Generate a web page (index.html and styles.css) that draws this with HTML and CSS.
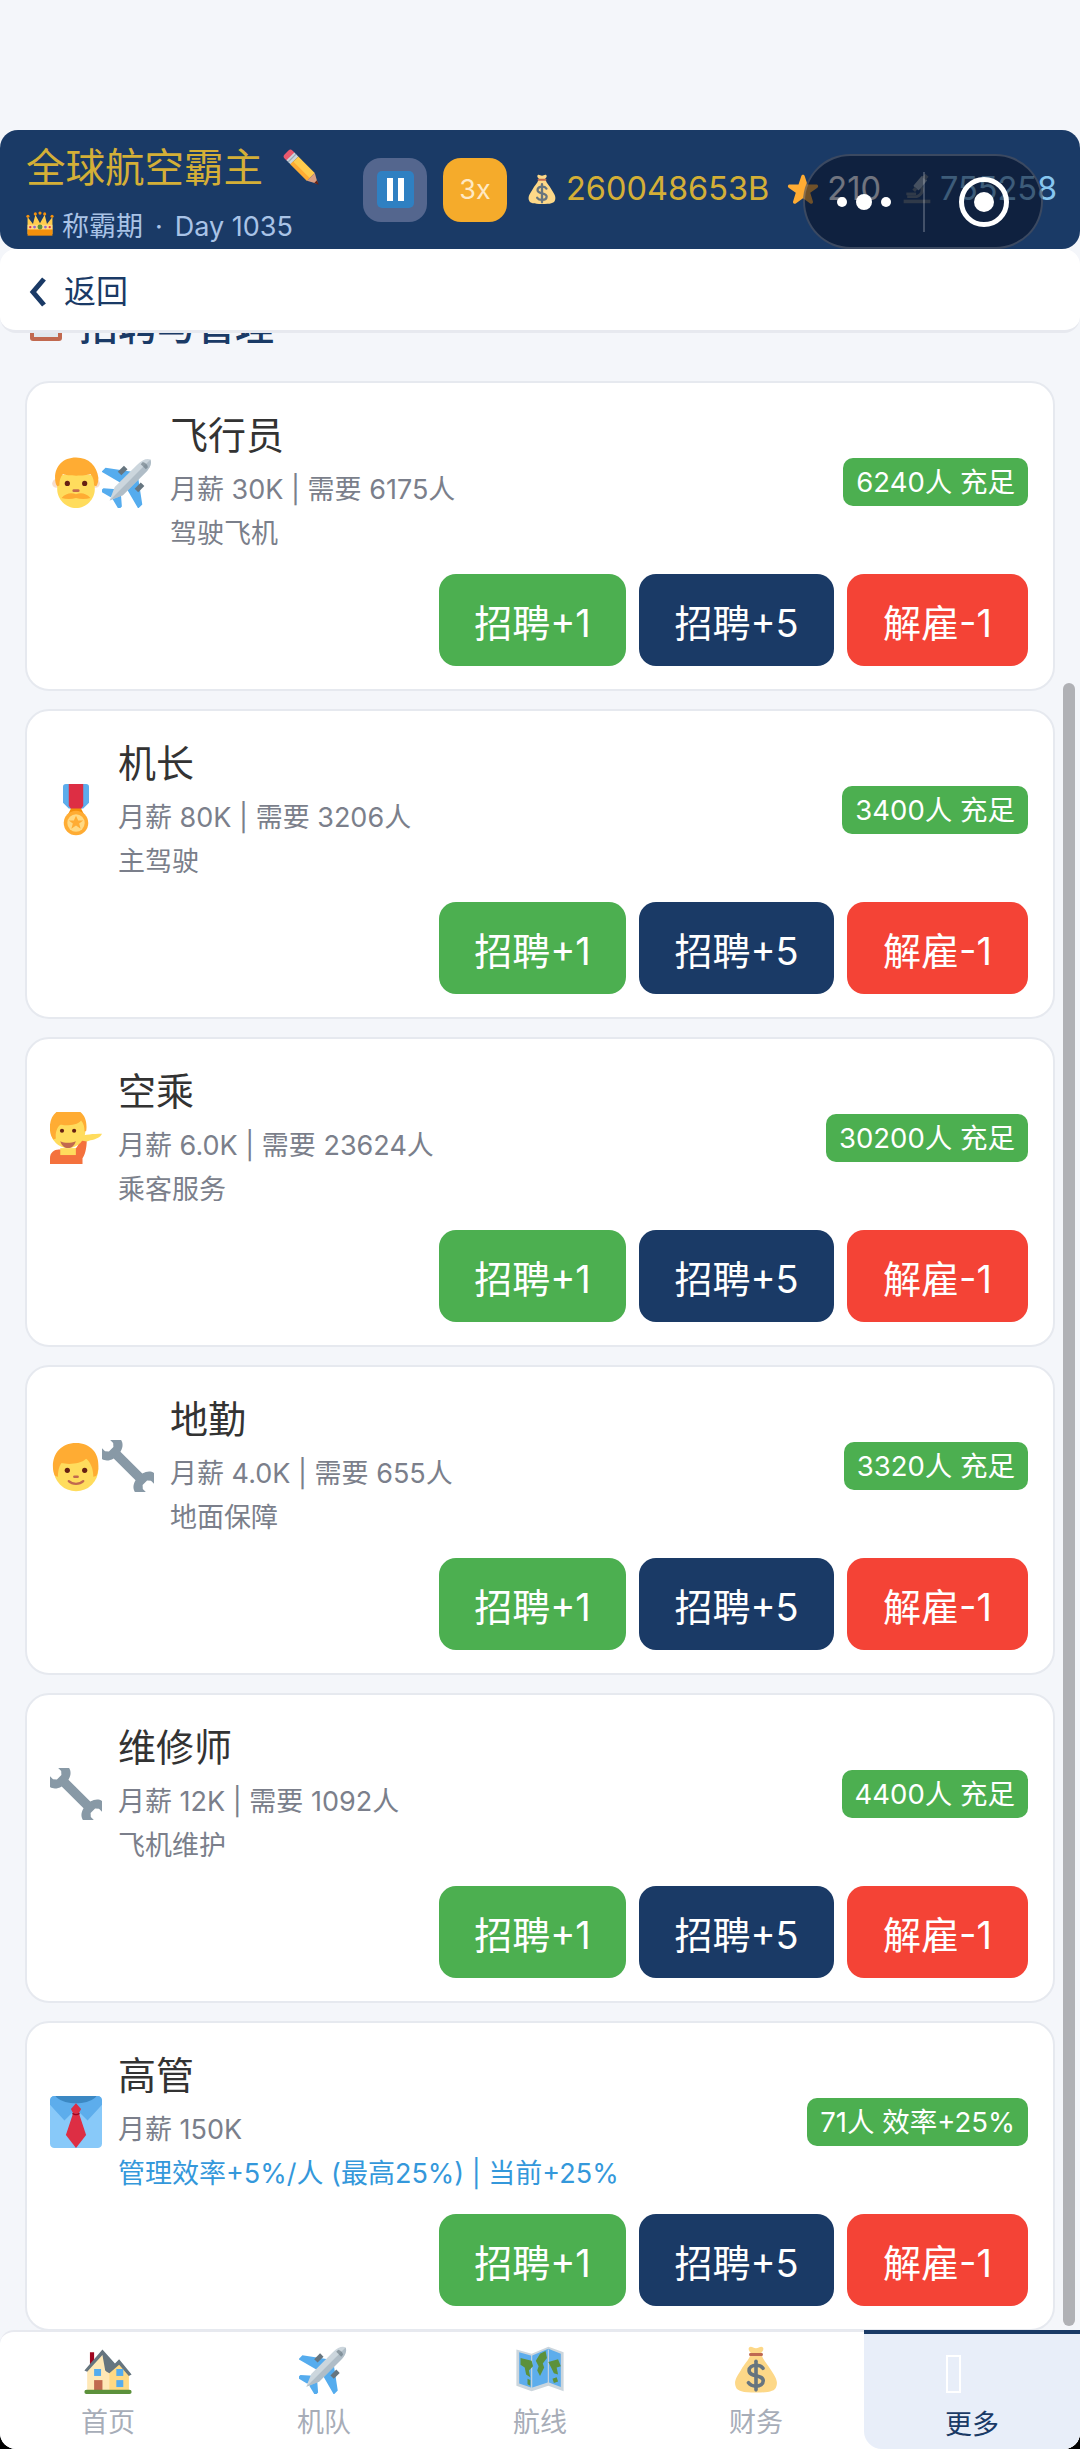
FILE: index.html
```html
<!DOCTYPE html>
<html lang="zh-CN">
<head>
<meta charset="utf-8">
<title>招聘与管理</title>
<link rel="stylesheet" href="styles.css">
</head>
<body>
<svg class="sprite" aria-hidden="true">
  <symbol id="i-pencil" viewBox="0 0 36 36"><g transform="rotate(45 18 18)"><rect x="-3" y="13" width="7" height="10" rx="2.5" fill="#EA596E"/><rect x="2" y="13" width="5" height="10" fill="#CCD6DD"/><rect x="3.5" y="13" width="1.2" height="10" fill="#99AAB5"/><rect x="7" y="13" width="21" height="10" fill="#FFCC4D"/><rect x="7" y="19.5" width="21" height="3.5" fill="#FFAC33"/><path d="M28 13l9 5-9 5z" fill="#D99E82"/><path d="M34 16.3l4 1.7-4 1.7z" fill="#662113"/></g></symbol>
  <symbol id="i-crown" viewBox="0 0 36 36"><path d="M2 9l7 9 3-12 6 11 6-11 3 12 7-9 0 22H2z" fill="#FFCC4D"/><path d="M2 24h32v9H2z" fill="#F4900C"/><circle cx="2.5" cy="8" r="2" fill="#F4900C"/><circle cx="12" cy="5" r="2" fill="#F4900C"/><circle cx="18" cy="4" r="2" fill="#F4900C"/><circle cx="24" cy="5" r="2" fill="#F4900C"/><circle cx="33.5" cy="8" r="2" fill="#F4900C"/><path d="M2 19h32v6H2z" fill="#FFD983"/><circle cx="18" cy="22" r="3.2" fill="#5C913B"/><circle cx="11" cy="22" r="1.8" fill="#9266CC"/><circle cx="25" cy="22" r="1.8" fill="#9266CC"/><circle cx="5.5" cy="22" r="1.5" fill="#DD2E44"/><circle cx="30.5" cy="22" r="1.5" fill="#DD2E44"/></symbol>
  <symbol id="i-bag" viewBox="0 0 36 36"><path d="M13 2.5c1.5-1.5 3 .5 5 .5s3.500-2 5-.5c1 1.500-.5 3-2 4.500H15c-1.500-1.500-3-3-2-4.500z" fill="#FDD888"/><path d="M14 8h8c1.500 4 4 6 7 11 3.500 5.500 5 8 3.500 12-1 3-5 4-14.500 4S4.500 34 3.500 31C2 27 3.500 24.500 7 19c3-5 5.500-7 7-11z" fill="#FDD888"/><rect x="13" y="6.500" width="10" height="2.200" rx="1" fill="#BF6952"/><g fill="none" stroke="#67757F" stroke-width="2.600" stroke-linecap="round"><path d="M23 17.500c-1-1.500-3-2.200-5-2.200-2.700 0-5 1.400-5 3.800 0 5 10.200 2.500 10.200 7.400 0 2.400-2.400 3.800-5.200 3.800-2.200 0-4.300-.8-5.400-2.400"/><path d="M18 12.500v20.500"/></g></symbol>
  <symbol id="i-star" viewBox="0 0 36 36"><path fill="#FFAC33" d="M27.287 34.627c-.404 0-.806-.124-1.152-.371L18 28.422l-8.135 5.834c-.693.496-1.623.496-2.312-.008-.689-.499-.979-1.385-.721-2.194l3.034-9.792-8.062-5.681c-.685-.505-.97-1.393-.708-2.203.264-.808 1.016-1.357 1.866-1.363L12.947 13l3.179-9.549c.268-.809 1.023-1.353 1.874-1.353.851 0 1.606.545 1.875 1.353L23 13l10.036.015c.853.006 1.606.556 1.867 1.363.263.81-.022 1.698-.708 2.203l-8.062 5.681 3.034 9.792c.26.809-.033 1.695-.72 2.194-.347.254-.753.379-1.16.379z"/></symbol>
  <symbol id="i-scope" viewBox="0 0 36 36"><path d="M3 30h30v4H3z" fill="#66757F"/><path d="M23 13c5 5 3 13-5 15H7v-3h10c6-1.500 6-7 3.500-10z" fill="#66757F"/><g transform="rotate(40 22 11)"><rect x="18" y="4" width="8" height="15" rx="1" fill="#99AAB5"/><rect x="19.500" y="0" width="5" height="5" fill="#66757F"/><rect x="20" y="19" width="4" height="4" fill="#66757F"/></g><path d="M6 22h11v3H6z" fill="#66757F"/></symbol>
  <symbol id="i-man" viewBox="0 0 36 36"><circle cx="4.500" cy="19" r="3" fill="#F7DECE"/><circle cx="31.500" cy="19" r="3" fill="#F7DECE"/><path d="M5 13h26v10c0 7-6 13-13 13S5 30 5 23z" fill="#FFDC5D"/><path d="M18 1C9 1 3.500 7 3.500 15c0 2.500.5 4.500 1.500 6l1.500-.5c0-3 .5-6 2.500-8 3 1.500 15 1.500 19 0 2 2 2.500 5 2.500 8l1.500.5c1-1.500 1.500-3.500 1.500-6C32.500 7 27 1 18 1z" fill="#FFAC33"/><circle cx="12" cy="19" r="1.800" fill="#662113"/><circle cx="24" cy="19" r="1.800" fill="#662113"/><rect x="15.500" y="23" width="5" height="2" rx="1" fill="#C1694F"/><path d="M8 29c3-3.500 7-4 10-2.500 3-1.500 7-1 10 2.500-3 1-7 1-10 0-3 1-7 1-10 0z" fill="#FFAC33"/></symbol>
  <symbol id="i-kid" viewBox="0 0 36 36"><circle cx="18" cy="20" r="15.500" fill="#FFDC5D"/><path d="M18 2C8 2 2 9 2 18c0 3 .5 5 1.500 7l2 .5c0-3 .5-7 2.500-9.500 4 1 13 1 17-3 3 2 5 7 5 12.500l2-.5c1-2 1.500-4 1.500-7C34 9 28 2 18 2z" fill="#FFAC33"/><circle cx="12" cy="21" r="1.800" fill="#662113"/><circle cx="24" cy="21" r="1.800" fill="#662113"/><rect x="16" y="24.500" width="4" height="1.800" rx=".9" fill="#C1694F"/><path d="M13 28.500c2.500 2.500 7.500 2.500 10 0" fill="none" stroke="#C1694F" stroke-width="1.600" stroke-linecap="round"/></symbol>
  <symbol id="i-plane" viewBox="0 0 36 36"><g transform="rotate(45 18 18)"><path d="M15 11L0 22v4l15-4zM21 11l15 11v4l-15-4zM16 27l-7 6v3l8-2zM20 27l7 6v3l-8-2z" fill="#55ACEE"/><rect x="8" y="12" width="3.500" height="6" fill="#66757F"/><rect x="24.500" y="12" width="3.500" height="6" fill="#66757F"/><path d="M18-4c2.500 1 4 4 4 9v22l-4 9-4-9V5c0-5 1.500-8 4-9z" fill="#CCD6DD"/><path d="M18-4c2.500 1 4 4 4 9v22l-4 9z" fill="#99AAB5" opacity=".55"/><path d="M15.500 1c1.500-1 3.500-1 5 0v2h-5z" fill="#66757F" opacity=".6"/></g></symbol>
  <symbol id="i-medal" viewBox="0 0 36 36"><path d="M9 2a2 2 0 0 1 2-2h14a2 2 0 0 1 2 2v11l-4 4H13l-4-4z" fill="#5DADEC"/><path d="M13 0h10v15l-2 3h-6l-2-3z" fill="#DD2E44"/><path d="M14.500 17h7l2 4h-11z" fill="#F4900C"/><circle cx="18" cy="27" r="8.500" fill="#FFAC33"/><circle cx="18" cy="27" r="6" fill="#FFD983"/><path d="M18 22l1.500 3.300h3.500l-2.800 2.100 1 3.500-3.200-2.100-3.200 2.100 1-3.500-2.800-2.100h3.500z" fill="#FFAC33"/></symbol>
  <symbol id="i-tip" viewBox="0 0 36 36"><path d="M0 36v-4c0-4 3-6 6-6h10c2-.5 3.500-2 4-5l.500-4 5 .5c0 5.500-.5 11-3 14.500v4z" fill="#F4713D"/><path d="M20 17c4-1.500 10-2 16-2-1 2.500-4.500 4-8 4.500l-2.500 1-5-1z" fill="#FFDC5D"/><g transform="translate(-2.500 -2.600) scale(1.2)"><path d="M8 23h9v4H8z" fill="#FFDC5D"/><circle cx="12.500" cy="13" r="10" fill="#FFDC5D"/><path d="M12.500 0C6 0 2 4.500 2 11c0 3 .5 5 2 7l1.500-.5c-.5-3 .5-6.500 2.500-8 3 .5 10 .5 12-2.500 1.500 1.500 2 3.500 2 6.500l1-.5C24 5 20 0 12.500 0z" fill="#FFAC33"/><circle cx="9" cy="13" r="1.200" fill="#662113"/><circle cx="16" cy="13" r="1.200" fill="#662113"/><path d="M8 19c2.500 1.200 6 1.200 9 0-1 2.800-2.500 4-4.500 4S9 21.800 8 19z" fill="#C1694F"/></g></symbol>
  <symbol id="i-wrench" viewBox="0 0 36 36"><g transform="rotate(-45 18 18)"><path fill="#8899A6" d="M14 -6.500V-0.500L15.800 1.500H20.200L22 -0.500V-6.500C25.800 -5.500 27.500 -2.500 27.500 0.500C27.500 3.800 25.300 6.300 21.300 7.300V28.700C25.300 29.700 27.500 32.200 27.500 35.500C27.500 38.500 25.800 41.500 22 42.500V36.500L20.200 34.500H15.800L14 36.500V42.500C10.200 41.500 8.500 38.500 8.500 35.500C8.500 32.200 10.700 29.700 14.700 28.700V7.300C10.700 6.300 8.500 3.800 8.500 0.500C8.500 -2.500 10.200 -5.500 14 -6.500Z"/></g></symbol>
  <symbol id="i-tie" viewBox="0 0 36 36"><rect x="0" y="0" width="36" height="36" rx="3" fill="#88C9F9"/><path d="M0 3a3 3 0 0 1 3-3h30a3 3 0 0 1 3 3v3L26 17l-8-8-8 8L0 6z" fill="#5DADEC"/><path d="M4 0h28v.5C28 4 23 5 18 5S8 4 4 .5z" fill="#3B88C3"/><path d="M18 5l3.500 4-1.500 3H16l-1.500-3z" fill="#DD2E44"/><path d="M16 12h4l5 15-7 9-7-9z" fill="#DD2E44"/><path d="M15.500 12c1.500 1 3.500 1 5 0" fill="none" stroke="#A0041E" stroke-width="1"/></symbol>
  <symbol id="i-house" viewBox="0 0 36 36"><path d="M3 34V17L13 7l10 10 3-2 7 6v13z" fill="#FFE8B6"/><path d="M19 34V19l7-6 7 8v13z" fill="#FFD983"/><path d="M5 6h3v7l-3 3z" fill="#A0041E"/><path d="M1 19L14 4l9 10 3-3 9 11-2 1-7-8-7 6-2-1-1-1L14 8 3 20z" fill="#66757F"/><rect x="8" y="18" width="5" height="5" fill="#55ACEE"/><rect x="24" y="18" width="5" height="5" fill="#55ACEE"/><rect x="24" y="26" width="5" height="5" fill="#55ACEE"/><rect x="8" y="26" width="6" height="8" fill="#C1694F"/><rect x="1" y="33" width="34" height="3" rx="1.500" fill="#5C913B"/></symbol>
  <symbol id="i-map" viewBox="0 0 36 36"><path d="M1 4l11 3 12-5 11 4v28l-11-4-12 4-11-4z" fill="#CCD6DD"/><path d="M3 6l9 2.500 12-5 9 3.500v24l-9-3.500-12 4-9-3z" fill="#5DADEC"/><path d="M12 8v24M24 4v24" stroke="#CCD6DD" stroke-width=".8"/><path d="M4 10l8 2 1 4-3 3 1 5-3-2-1-5-3-2zM15 12l3-5 4-2 1 5-3 4 1 3-3 6-2-4 1-3zM24 13l7-2 2 5-3 1 1 5-3-1-2-4zM27 25l3-1 1 3-3 1zM9 25l2 1 0 4-2-1z" fill="#5C913B"/></symbol>
  <symbol id="i-board" viewBox="0 0 36 36"><rect x="2" y="2" width="32" height="34" rx="3" fill="#C1694F"/><rect x="6" y="6" width="24" height="26" fill="#E1E8ED"/><path d="M10 20h16M10 25h16" stroke="#99AAB5" stroke-width="2"/></symbol>
</svg>

<div class="page">
  <div class="status-space"></div>

  <header class="game-bar">
    <div class="brand">
      <div class="brand-title"><span>全球航空霸主</span><svg class="emoji emoji-title"><use href="#i-pencil"/></svg></div>
      <div class="brand-sub"><svg class="emoji emoji-crown"><use href="#i-crown"/></svg><span>称霸期<span class="sub-dot">·</span>Day 1035</span></div>
    </div>
    <button class="ctl ctl-pause" type="button"><span class="pause-glyph"><i></i><i></i></span></button>
    <button class="ctl ctl-speed" type="button">3x</button>
    <div class="stat stat-money"><svg class="emoji emoji-stat"><use href="#i-bag"/></svg>260048653B</div>
    <div class="stat stat-star"><svg class="emoji emoji-stat"><use href="#i-star"/></svg>210</div>
    <div class="stat stat-sci"><svg class="emoji emoji-stat"><use href="#i-scope"/></svg>755258</div>
    <div class="capsule">
      <span class="capsule-dots"><i></i><i class="big"></i><i></i></span>
      <span class="capsule-line"></span>
      <span class="capsule-target"></span>
    </div>
  </header>

  <div class="back-bar">
    <svg class="back-chevron" viewBox="0 0 18 30"><path d="M15 2L4 15l11 13" fill="none" stroke="#1a3a66" stroke-width="5"/></svg>
    <span>返回</span>
  </div>

  <main class="content">
    <h2 class="section-title"><svg class="emoji emoji-board"><use href="#i-board"/></svg>招聘与管理</h2>

    <section class="card">
      <div class="card-top">
        <div class="role-icon"><svg class="emoji"><use href="#i-man"/></svg><svg class="emoji"><use href="#i-plane"/></svg></div>
        <div class="role-info">
          <div class="role-name">飞行员</div>
          <div class="role-meta">月薪 30K | 需要 6175人</div>
          <div class="role-desc">驾驶飞机</div>
        </div>
        <span class="pill">6240人 充足</span>
      </div>
      <div class="actions"><button class="btn btn-green" type="button">招聘+1</button><button class="btn btn-navy" type="button">招聘+5</button><button class="btn btn-red" type="button">解雇-1</button></div>
    </section>

    <section class="card">
      <div class="card-top">
        <div class="role-icon"><svg class="emoji"><use href="#i-medal"/></svg></div>
        <div class="role-info">
          <div class="role-name">机长</div>
          <div class="role-meta">月薪 80K | 需要 3206人</div>
          <div class="role-desc">主驾驶</div>
        </div>
        <span class="pill">3400人 充足</span>
      </div>
      <div class="actions"><button class="btn btn-green" type="button">招聘+1</button><button class="btn btn-navy" type="button">招聘+5</button><button class="btn btn-red" type="button">解雇-1</button></div>
    </section>

    <section class="card">
      <div class="card-top">
        <div class="role-icon"><svg class="emoji"><use href="#i-tip"/></svg></div>
        <div class="role-info">
          <div class="role-name">空乘</div>
          <div class="role-meta">月薪 6.0K | 需要 23624人</div>
          <div class="role-desc">乘客服务</div>
        </div>
        <span class="pill">30200人 充足</span>
      </div>
      <div class="actions"><button class="btn btn-green" type="button">招聘+1</button><button class="btn btn-navy" type="button">招聘+5</button><button class="btn btn-red" type="button">解雇-1</button></div>
    </section>

    <section class="card">
      <div class="card-top">
        <div class="role-icon"><svg class="emoji"><use href="#i-kid"/></svg><svg class="emoji"><use href="#i-wrench"/></svg></div>
        <div class="role-info">
          <div class="role-name">地勤</div>
          <div class="role-meta">月薪 4.0K | 需要 655人</div>
          <div class="role-desc">地面保障</div>
        </div>
        <span class="pill">3320人 充足</span>
      </div>
      <div class="actions"><button class="btn btn-green" type="button">招聘+1</button><button class="btn btn-navy" type="button">招聘+5</button><button class="btn btn-red" type="button">解雇-1</button></div>
    </section>

    <section class="card">
      <div class="card-top">
        <div class="role-icon"><svg class="emoji"><use href="#i-wrench"/></svg></div>
        <div class="role-info">
          <div class="role-name">维修师</div>
          <div class="role-meta">月薪 12K | 需要 1092人</div>
          <div class="role-desc">飞机维护</div>
        </div>
        <span class="pill">4400人 充足</span>
      </div>
      <div class="actions"><button class="btn btn-green" type="button">招聘+1</button><button class="btn btn-navy" type="button">招聘+5</button><button class="btn btn-red" type="button">解雇-1</button></div>
    </section>

    <section class="card">
      <div class="card-top">
        <div class="role-icon"><svg class="emoji"><use href="#i-tie"/></svg></div>
        <div class="role-info">
          <div class="role-name">高管</div>
          <div class="role-meta">月薪 150K</div>
          <div class="role-desc role-desc-blue">管理效率+5%/人 (最高25%) | 当前+25%</div>
        </div>
        <span class="pill">71人 效率+25%</span>
      </div>
      <div class="actions"><button class="btn btn-green" type="button">招聘+1</button><button class="btn btn-navy" type="button">招聘+5</button><button class="btn btn-red" type="button">解雇-1</button></div>
    </section>

    <div class="scroll-thumb"></div>
  </main>

  <nav class="tabs">
    <div class="tab"><svg class="emoji tab-icon"><use href="#i-house"/></svg><span>首页</span></div>
    <div class="tab"><svg class="emoji tab-icon"><use href="#i-plane"/></svg><span>机队</span></div>
    <div class="tab"><svg class="emoji tab-icon"><use href="#i-map"/></svg><span>航线</span></div>
    <div class="tab"><svg class="emoji tab-icon"><use href="#i-bag"/></svg><span>财务</span></div>
    <div class="tab tab-active"><span class="tofu"></span><span>更多</span></div>
  </nav>
</div>
</body>
</html>
```
FILE: styles.css
```css
* { box-sizing: border-box; }
html, body { margin: 0; padding: 0; background: #000; }
body {
  width: 1080px;
  height: 2449px;
  overflow: hidden;
  font-family: Inter, "Noto Sans CJK SC", sans-serif;
  font-weight: 400;
}
button { font-family: inherit; font-weight: inherit; border: 0; margin: 0; }
.sprite { position: absolute; width: 0; height: 0; }
.emoji { display: block; flex: none; width: 52px; height: 52px; overflow: visible; }

.page {
  position: relative;
  display: flex;
  flex-direction: column;
  height: 2449px;
  background: #f4f6fa;
  border-radius: 0 0 16px 16px;
  overflow: hidden;
}
.status-space { flex: none; height: 130px; }

/* game bar */
.game-bar {
  position: relative;
  z-index: 3;
  flex: none;
  display: flex;
  align-items: center;
  height: 119px;
  padding: 0 0 0 26px;
  background: #1a3a66;
  border-radius: 18px;
  white-space: nowrap;
}
.brand { flex: none; width: 337px; padding-top: 10px; }
.brand-title {
  display: flex;
  align-items: center;
  gap: 20px;
  height: 50px;
  font-size: 39.500px;
  line-height: 50px;
  color: #d4af37;
}
.emoji-title { width: 40px; height: 40px; margin-top: 2px; }
.brand-sub {
  display: flex;
  align-items: center;
  gap: 8px;
  height: 44px;
  margin-top: 9px;
  font-size: 27px;
  color: #a9c3e6;
}
.sub-dot { margin: 0 12px; }
.emoji-crown { width: 28px; height: 28px; }
.ctl {
  flex: none;
  width: 64px;
  height: 64px;
  border-radius: 18px;
  padding: 0;
  display: flex;
  align-items: center;
  justify-content: center;
}
.ctl-pause { background: #54668e; }
.pause-glyph {
  display: flex;
  align-items: center;
  justify-content: center;
  gap: 5px;
  width: 37px;
  height: 37px;
  background: #2f80c2;
  border-radius: 5px;
}
.pause-glyph i { display: block; width: 6px; height: 23px; background: #fff; }
.ctl-speed {
  margin-left: 16px;
  background: #f5ab2b;
  color: #ffe9c4;
  font-size: 27px;
}
.stat {
  flex: none;
  display: flex;
  align-items: center;
  font-size: 32.500px;
  margin-top: -2px;
}
.emoji-stat { width: 32px; height: 32px; }
.stat-money { margin-left: 19px; gap: 8px; color: #d4af37; }
.stat-star { margin-left: 18px; gap: 8px; color: #fff; }
.stat-sci { margin-left: 20px; gap: 7px; color: #87c6f0; }
.capsule {
  position: absolute;
  left: 803px;
  top: 24px;
  width: 240px;
  height: 95px;
  background: rgba(8, 16, 34, .58);
  border: 2px solid rgba(255, 255, 255, .18);
  border-radius: 48px;
}
.capsule-dots {
  position: absolute;
  left: 32px;
  top: 38px;
  display: flex;
  align-items: center;
  gap: 9px;
}
.capsule-dots i { display: block; width: 10px; height: 10px; border-radius: 50%; background: #fff; }
.capsule-dots i.big { width: 16px; height: 16px; }
.capsule-line {
  position: absolute;
  left: 118px;
  top: 16px;
  width: 2px;
  height: 60px;
  background: rgba(255, 255, 255, .22);
}
.capsule-target {
  position: absolute;
  left: 154px;
  top: 21px;
  width: 50px;
  height: 50px;
  border: 5px solid #fff;
  border-radius: 50%;
}
.capsule-target::after {
  content: "";
  position: absolute;
  left: 10px;
  top: 10px;
  width: 20px;
  height: 20px;
  background: #fff;
  border-radius: 50%;
}

/* back bar */
.back-bar {
  position: relative;
  z-index: 2;
  flex: none;
  display: flex;
  align-items: center;
  gap: 17px;
  height: 84px;
  padding: 1px 0 2px 29px;
  background: #fff;
  border-bottom: 3px solid #e7e9ef;
  border-radius: 16px;
  font-size: 32px;
  color: #1a3a66;
}
.back-chevron { flex: none; width: 18px; height: 30px; margin-top: 6px; }

/* content */
.content {
  position: relative;
  flex: 1;
  min-height: 0;
  overflow: hidden;
  padding: 0 25px;
}
.section-title {
  display: flex;
  align-items: center;
  gap: 15px;
  height: 52px;
  margin: -36px 0 0;
  padding-left: 3px;
  font-size: 39px;
  font-weight: 500;
  color: #1a3a66;
}
.emoji-board { width: 36px; height: 36px; }
.section-title + .card { margin-top: 32px; }
.card {
  height: 310px;
  margin-bottom: 18px;
  padding: 25px 25px 24px 23px;
  background: #fff;
  border: 2px solid #e6e9ef;
  border-radius: 24px;
}
.card-top {
  display: flex;
  align-items: center;
  height: 148px;
}
.role-icon { flex: none; display: flex; margin-right: 16px; }
.role-info { flex: 1; min-width: 0; }
.role-name { font-size: 38px; line-height: 54px; color: #333; }
.role-meta { font-size: 27px; line-height: 44px; margin-top: 6px; color: #7b7f8b; }
.role-desc { font-size: 27px; line-height: 44px; color: #7b7f8b; }
.role-desc-blue { color: #3498db; }
.pill {
  flex: none;
  height: 48px;
  padding: 0 13px;
  background: #4caf50;
  border-radius: 10px;
  color: #fff;
  font-size: 27.500px;
  line-height: 48px;
}
.actions {
  display: flex;
  justify-content: flex-end;
  gap: 13px;
  margin-top: 18px;
}
.btn {
  flex: none;
  height: 92px;
  padding: 0;
  border-radius: 17px;
  color: #fff;
  font-size: 38px;
}
.btn-green { background: #4caf50; width: 187px; }
.btn-navy { background: #1a3a66; width: 195px; }
.btn-red { background: #f44336; width: 181px; }
.scroll-thumb {
  position: absolute;
  right: 5px;
  top: 350px;
  width: 12px;
  height: 1643px;
  background: #b0b1b5;
  border-radius: 6px;
}

/* tabs */
.tabs {
  position: relative;
  z-index: 2;
  flex: none;
  display: flex;
  height: 119px;
  background: #fff;
  border-radius: 14px 14px 0 0;
  border-top: 2px solid #e7e9ef;
}
.tab {
  flex: 1;
  display: flex;
  flex-direction: column;
  align-items: center;
  padding-top: 12px;
  font-size: 27px;
  line-height: 40px;
  color: #a7adb8;
}
.tab-icon { width: 50px; height: 50px; margin-bottom: 9px; }
.tab-active {
  margin-top: -2px;
  background: #e8eef9;
  border-top: 4px solid #1a3a66;
  border-radius: 0 0 0 18px;
  color: #1a3a66;
  padding-top: 21px;
}
.tofu {
  display: block;
  width: 15px;
  height: 38px;
  margin: 0 37px 12px 0;
  border: 2px solid #fff;
}
```
